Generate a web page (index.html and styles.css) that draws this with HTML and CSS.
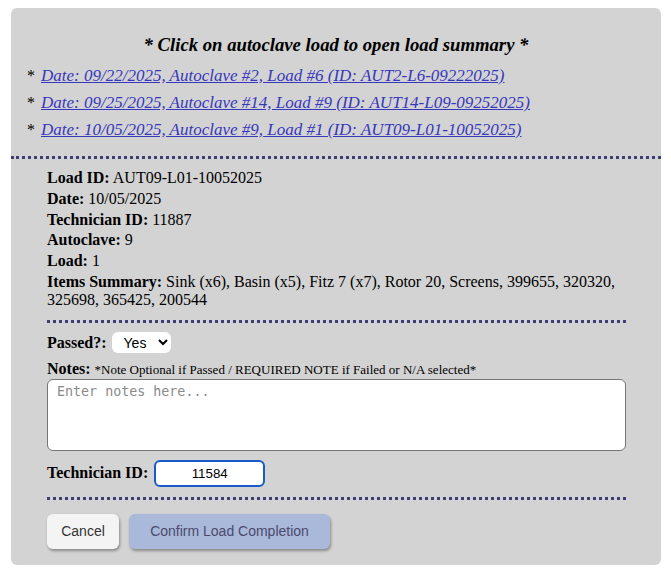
FILE: index.html
```html
<!DOCTYPE html>
<html>
<head>
<meta charset="utf-8">
<link rel="stylesheet" href="styles.css">
</head>
<body>
<div class="panel">
  <div class="loads">
    <h3 class="hint">* Click on autoclave load to open load summary *</h3>
    <ul class="load-list">
      <li><a href="#">Date: 09/22/2025, Autoclave #2, Load #6 (ID: AUT2-L6-09222025)</a></li>
      <li><a href="#">Date: 09/25/2025, Autoclave #14, Load #9 (ID: AUT14-L09-09252025)</a></li>
      <li><a href="#">Date: 10/05/2025, Autoclave #9, Load #1 (ID: AUT09-L01-10052025)</a></li>
    </ul>
  </div>
  <div class="summary">
    <div class="details">
      <p><b>Load ID:</b> AUT09-L01-10052025</p>
      <p><b>Date:</b> 10/05/2025</p>
      <p><b>Technician ID:</b> 11887</p>
      <p><b>Autoclave:</b> 9</p>
      <p><b>Load:</b> 1</p>
      <p><b>Items Summary:</b> Sink (x6), Basin (x5), Fitz 7 (x7), Rotor 20, Screens, 399655, 320320, 325698, 365425, 200544</p>
    </div>
    <div class="form">
      <div class="passed-row">
        <b>Passed?:</b>
        <select class="select"><option>Yes</option><option>No</option><option>N/A</option></select>
      </div>
      <div class="notes-label"><b>Notes:</b> <span class="note-small">*Note Optional if Passed / REQUIRED NOTE if Failed or N/A selected*</span></div>
      <textarea class="notes" placeholder="Enter notes here..."></textarea>
      <div class="tech-row">
        <b>Technician ID:</b>
        <input class="tech-input" type="text" value="11584">
      </div>
    </div>
    <div class="actions">
      <button class="btn btn-cancel">Cancel</button>
      <button class="btn btn-confirm">Confirm Load Completion</button>
    </div>
  </div>
</div>
</body>
</html>
```

FILE: styles.css
```css
html, body {
  margin: 0;
  padding: 0;
  background: #ffffff;
}
body {
  font-family: "Liberation Serif", "Times New Roman", serif;
  font-size: 16px;
  color: #000;
}
.panel {
  margin: 8px 10px 0 11px;
  width: 650px;
  height: 557px;
  background: #d3d3d3;
  border-radius: 6px;
  box-sizing: border-box;
}
.loads {
  padding: 26px 0 13px 0;
  border-bottom: 3px dotted #3d3d78;
}
.hint {
  margin: 0 0 6px 0;
  text-align: center;
  font-size: 18.72px;
  font-style: italic;
  font-weight: bold;
  line-height: 22px;
}
.load-list {
  list-style: none;
  margin: 0;
  padding: 0 0 0 16px;
}
.load-list li {
  line-height: 27px;
  font-size: 17px;
}
.load-list li::before {
  content: "*";
  display: inline-block;
  width: 14px;
  font-size: 16px;
}
.load-list a {
  color: #3737bb;
  font-style: italic;
}
.summary {
  padding: 10px 35px 0 36px;
}
.details {
  padding-bottom: 8px;
  border-bottom: 3px dotted #3d3d78;
}
.details p {
  margin: 0 0 2.8px 0;
  line-height: 18px;
}
.form {
  padding: 9px 0 10px 0;
  border-bottom: 3px dotted #3d3d78;
}
.passed-row {
  display: flex;
  align-items: center;
  gap: 5px;
  height: 22px;
}
.select {
  font-family: "Liberation Sans", Arial, sans-serif;
  font-size: 14px;
  height: 21px;
  width: 59px;
  border: none;
  border-radius: 6px;
  background: #fff;
  padding: 0 4px 0 8px;
}
.notes-label {
  margin-top: 6px;
  line-height: 18px;
}
.note-small {
  font-size: 13px;
}
.notes {
  display: block;
  width: 100%;
  height: 72px;
  box-sizing: border-box;
  border: 1px solid #767676;
  border-radius: 6px;
  background: #fff;
  resize: none;
  margin-top: 0;
  padding: 4px 9px;
  font-family: "DejaVu Sans Mono", "Liberation Mono", monospace;
  font-size: 13.33px;
}
.notes::placeholder {
  color: #8a8a8a;
}
.tech-row {
  display: flex;
  align-items: center;
  gap: 6px;
  margin-top: 9px;
}
.tech-input {
  width: 111px;
  height: 27px;
  box-sizing: border-box;
  border: 2px solid #1a5ac8;
  border-radius: 6px;
  background: #fff;
  text-align: center;
  font-family: "Liberation Sans", Arial, sans-serif;
  font-size: 13.33px;
  outline: none;
}
.actions {
  display: flex;
  gap: 10px;
  padding-top: 14px;
}
.btn {
  height: 35px;
  border: none;
  border-radius: 6px;
  font-family: "Liberation Sans", Arial, sans-serif;
  font-size: 14px;
  padding: 0 10px;
  box-shadow: 1px 2px 3px rgba(0, 0, 0, 0.35);
}
.btn-cancel {
  background: #f4f4f4;
  color: #333;
  width: 72px;
}
.btn-confirm {
  background: #aab8d9;
  color: #4a4a6e;
  width: 201px;
}
```
